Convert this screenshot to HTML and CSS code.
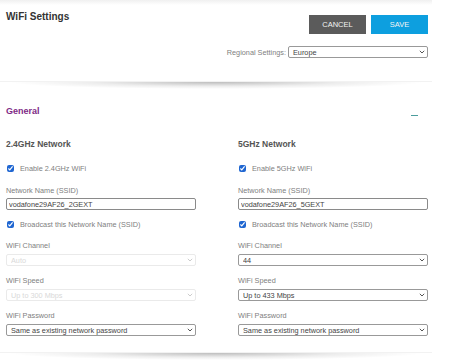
FILE: index.html
```html
<!DOCTYPE html>
<html lang="en">
<head>
  <meta charset="UTF-8" />
  <title>WiFi Settings</title>
  <link rel="stylesheet" href="styles.css">
</head>
<body>
  <div class="page">
    <header class="panel head">
      <div class="head-top">
        <h1>WiFi Settings</h1>
        <div class="actions">
          <button type="button" class="btn cancel-btn">CANCEL</button>
          <button type="button" class="btn save-btn">SAVE</button>
        </div>
      </div>
      <div class="region">
        <label for="region">Regional Settings:</label>
        <div class="select region-select">
          <select id="region">
            <option>Europe</option>
          </select>
          <svg class="chev" viewBox="0 0 6 4" width="6" height="4"><path d="M0.8 0.8 L3 3 L5.2 0.8" fill="none" stroke="#555" stroke-width="1"/></svg>
        </div>
      </div>
    </header>
    <div class="shadow"></div>

    <section class="panel general">
      <div class="section-head">
        <h2>General</h2>
        <span class="collapse"></span>
      </div>

      <div class="columns">
        <div class="col">
          <h3>2.4GHz Network</h3>
          <label class="check-row"><input type="checkbox" checked /> Enable 2.4GHz WiFi</label>

          <div class="field name-field">
            <label for="ssid24">Network Name (SSID)</label>
            <input type="text" id="ssid24" value="vodafone29AF26_2GEXT" />
          </div>
          <label class="check-row broadcast"><input type="checkbox" checked /> Broadcast this Network Name (SSID)</label>

          <div class="field">
            <label>WiFi Channel</label>
            <div class="select is-disabled">
              <select disabled><option>Auto</option></select>
              <svg class="chev" viewBox="0 0 6 4" width="6" height="4"><path d="M0.8 0.8 L3 3 L5.2 0.8" fill="none" stroke="#ccc" stroke-width="1"/></svg>
            </div>
          </div>
          <div class="field">
            <label>WiFi Speed</label>
            <div class="select is-disabled">
              <select disabled><option>Up to 300 Mbps</option></select>
              <svg class="chev" viewBox="0 0 6 4" width="6" height="4"><path d="M0.8 0.8 L3 3 L5.2 0.8" fill="none" stroke="#ccc" stroke-width="1"/></svg>
            </div>
          </div>
          <div class="field">
            <label>WiFi Password</label>
            <div class="select">
              <select><option>Same as existing network password</option></select>
              <svg class="chev" viewBox="0 0 6 4" width="6" height="4"><path d="M0.8 0.8 L3 3 L5.2 0.8" fill="none" stroke="#555" stroke-width="1"/></svg>
            </div>
          </div>
        </div>

        <div class="col">
          <h3>5GHz Network</h3>
          <label class="check-row"><input type="checkbox" checked /> Enable 5GHz WiFi</label>

          <div class="field name-field">
            <label for="ssid5">Network Name (SSID)</label>
            <input type="text" id="ssid5" value="vodafone29AF26_5GEXT" />
          </div>
          <label class="check-row broadcast"><input type="checkbox" checked /> Broadcast this Network Name (SSID)</label>

          <div class="field">
            <label>WiFi Channel</label>
            <div class="select">
              <select><option>44</option></select>
              <svg class="chev" viewBox="0 0 6 4" width="6" height="4"><path d="M0.8 0.8 L3 3 L5.2 0.8" fill="none" stroke="#555" stroke-width="1"/></svg>
            </div>
          </div>
          <div class="field">
            <label>WiFi Speed</label>
            <div class="select">
              <select><option>Up to 433 Mbps</option></select>
              <svg class="chev" viewBox="0 0 6 4" width="6" height="4"><path d="M0.8 0.8 L3 3 L5.2 0.8" fill="none" stroke="#555" stroke-width="1"/></svg>
            </div>
          </div>
          <div class="field">
            <label>WiFi Password</label>
            <div class="select">
              <select><option>Same as existing network password</option></select>
              <svg class="chev" viewBox="0 0 6 4" width="6" height="4"><path d="M0.8 0.8 L3 3 L5.2 0.8" fill="none" stroke="#555" stroke-width="1"/></svg>
            </div>
          </div>
        </div>
      </div>
    </section>
    <div class="shadow"></div>
  </div>
</body>
</html>
```

FILE: styles.css
```css
body {
  font-family: 'Liberation Sans', Arial, sans-serif;
  margin: 0;
  padding: 0;
  background-color: white;
  color: #333;
}
.page {
  width: 432px;
}
.panel {
  box-sizing: border-box;
  padding: 0 4px 0 6px;
  background-color: white;
}
.head {
  height: 81px;
  padding-top: 11px;
  background: linear-gradient(#f0f0f0 0, #fff 5px);
}
.head-top {
  display: flex;
  justify-content: space-between;
  align-items: flex-start;
}
.head h1 {
  margin: 0;
  font-size: 10px;
  line-height: 12px;
  font-weight: bold;
  color: #333;
}
.actions {
  display: flex;
  gap: 5px;
  margin-top: 4px;
}
.btn {
  font-family: 'Liberation Sans', Arial, sans-serif;
  width: 57px;
  height: 19px;
  padding: 0;
  border: none;
  font-size: 7.5px;
  color: #f4f4f4;
  cursor: pointer;
}
.cancel-btn {
  background-color: #5b5b5b;
}
.save-btn {
  background-color: #0d9fdf;
}
.region {
  display: flex;
  justify-content: flex-end;
  align-items: center;
  gap: 2px;
  margin-top: 12px;
  font-size: 7.3px;
  color: #808080;
}
.region-select {
  width: 140px;
}
.region-select select {
  color: #555;
}
.shadow {
  height: 7px;
  background: radial-gradient(ellipse 48% 100% at 50% 0, rgba(0, 0, 0, 0.26), rgba(0, 0, 0, 0.07) 60%, rgba(0, 0, 0, 0) 100%);
  border-top: 1px solid #f2f2f2;
}
.general {
  padding-top: 17px;
  padding-bottom: 16px;
}
.section-head {
  display: flex;
  justify-content: space-between;
  align-items: center;
  height: 11px;
}
.section-head h2 {
  margin: 0;
  font-size: 9px;
  line-height: 11px;
  font-weight: bold;
  color: #7e2a86;
}
.collapse {
  width: 7px;
  height: 1px;
  margin: 7px 10px 0 0;
  background-color: #4c9d9d;
}
.columns {
  display: grid;
  grid-template-columns: 190px 190px;
  justify-content: space-between;
  margin-top: 22px;
}
.col h3 {
  margin: 0 0 15px;
  font-size: 8.5px;
  line-height: 10px;
  font-weight: bold;
  color: #555;
}
.check-row {
  display: flex;
  align-items: center;
  gap: 6px;
  height: 9px;
  font-size: 7.3px;
  color: #808080;
}
.check-row input {
  width: 7px;
  height: 7px;
  margin: 0 0 0 1px;
  accent-color: #1f66d1;
}
.broadcast {
  margin-top: 10px;
  margin-bottom: 12px;
}
.field {
  margin-bottom: 10px;
}
.field:last-child {
  margin-bottom: 0;
}
.field label {
  display: block;
  margin-bottom: 4px;
  font-size: 7.3px;
  line-height: 9px;
  color: #808080;
}
.name-field {
  margin-top: 13px;
  margin-bottom: 0;
}
.name-field label {
  margin-bottom: 3px;
}
.field input {
  font-family: 'Liberation Sans', Arial, sans-serif;
  display: block;
  box-sizing: border-box;
  width: 100%;
  height: 12px;
  padding: 0 2px;
  border: 1px solid #8a8a8a;
  border-radius: 2px;
  font-size: 7.3px;
  color: #444;
  outline: none;
}
.select {
  position: relative;
  height: 12px;
}
.select select {
  font-family: 'Liberation Sans', Arial, sans-serif;
  appearance: none;
  display: block;
  box-sizing: border-box;
  width: 100%;
  height: 12px;
  padding: 0 12px 0 4px;
  border: 1px solid #999;
  border-radius: 2px;
  background-color: white;
  font-size: 7.3px;
  color: #444;
  outline: none;
}
.chev {
  position: absolute;
  right: 3px;
  top: 4px;
  pointer-events: none;
}
.is-disabled select {
  border-color: #e2e2e2;
  color: #c9c9c9;
}
```
